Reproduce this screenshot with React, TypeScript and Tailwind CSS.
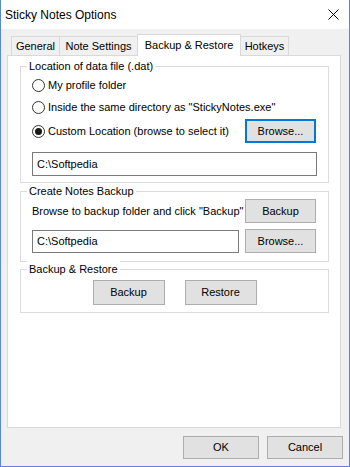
import React from "react";

const font = { fontFamily: '"Liberation Sans", Arial, sans-serif' };

function Radio({ checked, label }: { checked?: boolean; label: string }) {
  return (
    <div className="flex items-center h-[20px]">
      <div className="w-[13px] h-[13px] rounded-full border border-[#333333] bg-white flex items-center justify-center">
        {checked && <div className="w-[7px] h-[7px] rounded-full bg-[#1a1a1a]" />}
      </div>
      <span className="ml-[3px] text-[11px] leading-[16px] text-black whitespace-nowrap">{label}</span>
    </div>
  );
}

function Btn({ label, className = "", focused = false }: { label: string; className?: string; focused?: boolean }) {
  return (
    <div
      className={
        "flex items-center justify-center bg-[#e1e1e1] text-[11px] text-black whitespace-nowrap " +
        (focused ? "border-2 border-[#0078d7] " : "border border-[#adadad] ") +
        className
      }
    >
      {label}
    </div>
  );
}

function Input({ value, className = "" }: { value: string; className?: string }) {
  return (
    <div className={"flex items-center bg-white border border-[#7a7a7a] pl-[4px] text-[11px] text-black " + className}>
      {value}
    </div>
  );
}

function Group({ title, className = "", children }: { title: string; className?: string; children: React.ReactNode }) {
  return (
    <div className={"relative ml-[12px] w-[309px] border border-[#dcdcdc] " + className}>
      <span className="absolute left-[6px] top-[-9px] bg-white px-[2px] text-[11px] leading-[16px] text-black whitespace-nowrap">
        {title}
      </span>
      {children}
    </div>
  );
}

export default function App() {
  return (
    <div
      style={font}
      className="w-[350px] h-[467px] bg-[#f0f0f0] border-l border-r border-b border-[#5b85d5] flex flex-col text-black"
    >
      <div className="h-[29px] bg-white flex items-center justify-between pl-[4px] pr-[9px]">
        <span className="text-[12px] leading-[16px]">Sticky Notes Options</span>
        <svg width="11" height="11" viewBox="0 0 11 11" className="mr-[1px]">
          <path d="M0.5 0.5 L10.5 10.5 M10.5 0.5 L0.5 10.5" stroke="#000" strokeWidth="1" />
        </svg>
      </div>
      <div className="pl-[6px] flex flex-col">
        <div className="flex items-end h-[21px] mt-[5px] pl-[4px]">
          <div className="w-[49px] h-[19px] border border-b-0 border-[#d9d9d9] bg-[#f0f0f0] flex items-center justify-center text-[11px]">
            General
          </div>
          <div className="-ml-[1px] w-[79px] h-[19px] border border-b-0 border-[#d9d9d9] bg-[#f0f0f0] flex items-center justify-center text-[11px]">
            Note Settings
          </div>
          <div className="relative z-10 -ml-[1px] -mb-[1px] w-[104px] h-[22px] border border-b-0 border-[#d9d9d9] bg-white flex items-center justify-center text-[11px] pb-[1px]">
            Backup &amp; Restore
          </div>
          <div className="-ml-[1px] w-[49px] h-[19px] border border-b-0 border-[#d9d9d9] bg-[#f0f0f0] flex items-center justify-center text-[11px]">
            Hotkeys
          </div>
        </div>
        <div className="w-[334px] h-[373px] bg-white border border-[#d9d9d9] flex flex-col">
          <Group title="Location of data file (.dat)" className="mt-[10px] h-[117px]">
            <div className="pl-[11px] pr-[12px] pt-[8px] flex flex-col">
              <Radio label="My profile folder" />
              <div className="mt-[2px]">
                <Radio label={'Inside the same directory as "StickyNotes.exe"'} />
              </div>
              <div className="mt-[2px] flex items-center justify-between h-[24px]">
                <Radio checked label="Custom Location (browse to select it)" />
                <Btn focused label="Browse..." className="w-[71px] h-[24px]" />
              </div>
              <Input value="C:\Softpedia" className="mt-[9px] w-[285px] h-[24px]" />
            </div>
          </Group>
          <Group title="Create Notes Backup" className="mt-[8px] h-[71px]">
            <div className="pl-[11px] pr-[12px] pt-[7px] flex flex-col">
              <div className="flex items-center justify-between h-[24px]">
                <span className="text-[11px] whitespace-nowrap">Browse to backup folder and click "Backup"</span>
                <Btn label="Backup" className="w-[71px] h-[24px]" />
              </div>
              <div className="mt-[6px] flex items-end justify-between">
                <Input value="C:\Softpedia" className="w-[207px] h-[23px]" />
                <Btn label="Browse..." className="w-[71px] h-[24px]" />
              </div>
            </div>
          </Group>
          <Group title="Backup &amp; Restore" className="mt-[7px] h-[44px]">
            <div className="pt-[10px] flex justify-center gap-[20px]">
              <Btn label="Backup" className="w-[72px] h-[25px]" />
              <Btn label="Restore" className="w-[72px] h-[25px]" />
            </div>
          </Group>
        </div>
        <div className="mt-[8px] flex justify-end gap-[8px] pr-[6px]">
          <Btn label="OK" className="w-[76px] h-[23px]" />
          <Btn label="Cancel" className="w-[76px] h-[23px]" />
        </div>
      </div>
    </div>
  );
}
